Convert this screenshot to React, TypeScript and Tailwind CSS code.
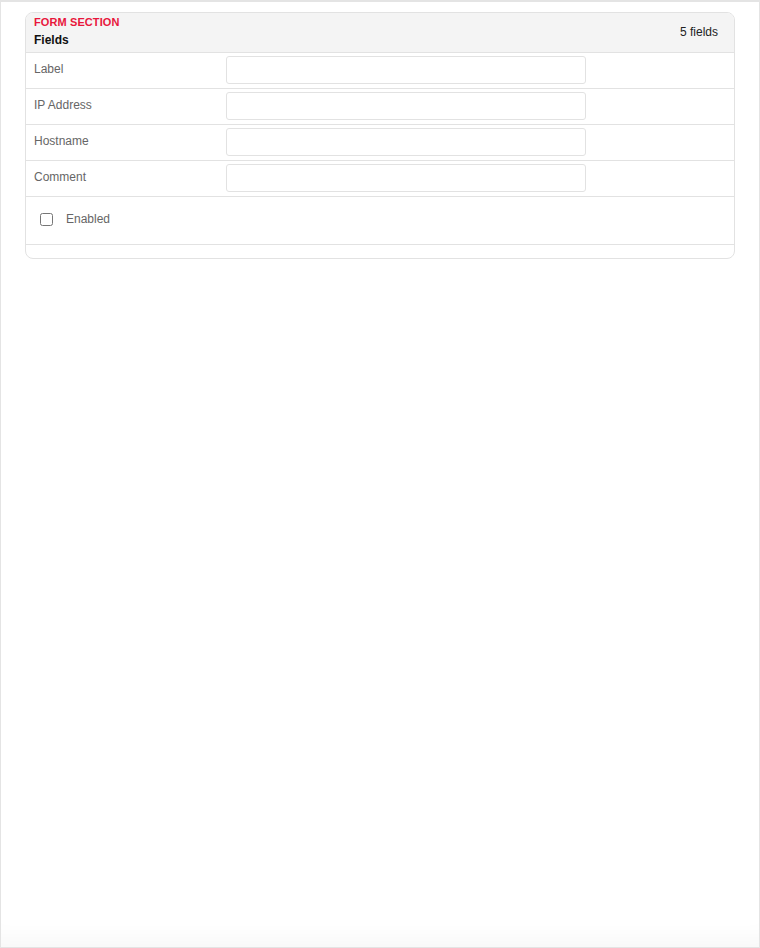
import React from "react";

const fields = ["Label", "IP Address", "Hostname", "Comment"];

const App = () => {
  return (
    <div
      className="box-border min-h-[948px] border-x border-b border-t-2 border-[#e4e4e4] bg-white px-6 pt-2.5 shadow-[inset_0_-26px_22px_-18px_rgba(0,0,0,0.035)]"
      style={{ fontFamily: '"Liberation Sans", Arial, sans-serif' }}
    >
      <div className="overflow-hidden rounded-lg border border-[#e2e2e2] bg-white">
        <div className="flex items-center justify-between border-b border-[#e2e2e2] bg-[#f4f4f4] pb-1 pl-2 pr-4 pt-[2px]">
          <div className="flex flex-col gap-[3px]">
            <span className="text-[11px] font-bold uppercase leading-[14px] tracking-[0.1px] text-[#e8173c]">
              Form Section
            </span>
            <span className="text-[12px] font-bold leading-[16px] text-[#111]">
              Fields
            </span>
          </div>
          <span className="text-[12px] leading-[16px] text-[#222]">5 fields</span>
        </div>

        {fields.map((f) => (
          <div
            key={f}
            className="flex h-9 items-center border-b border-[#e2e2e2] pb-px"
          >
            <label className="mb-[2px] w-[200px] pl-2 text-[12px] text-[#666]">{f}</label>
            <input
              type="text"
              className="h-7 w-[360px] rounded-[3px] border border-[#e2e2e2] bg-white px-2 text-[12px] outline-none"
            />
          </div>
        ))}

        <div className="flex h-12 items-center gap-[13px] border-b border-[#e2e2e2] pb-[2px] pl-[14px]">
          <input type="checkbox" className="h-[13px] w-[13px]" />
          <span className="mb-[2px] text-[12px] text-[#666]">Enabled</span>
        </div>

        <div className="h-[13px]" />
      </div>
    </div>
  );
};

export default App;
